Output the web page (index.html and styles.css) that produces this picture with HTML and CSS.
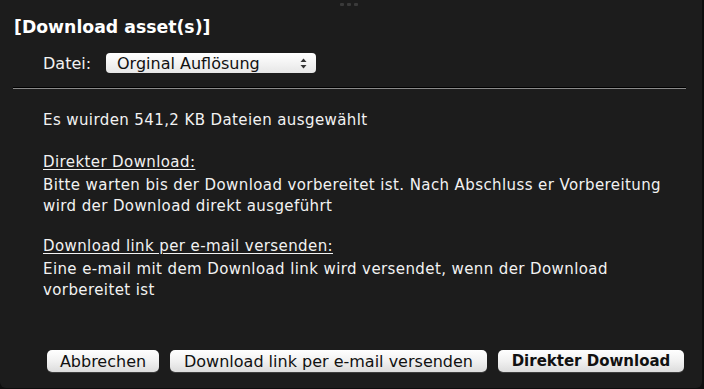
FILE: index.html
```html
<!DOCTYPE html>
<html lang="de">
<head>
  <meta charset="UTF-8" />
  <title>Download asset(s)</title>
  <link rel="stylesheet" href="styles.css">
</head>
<body>

<div class="dialog">
  <div class="grip"><span></span><span></span><span></span></div>

  <h1>[Download asset(s)]</h1>

  <div class="file-row">
    <label for="fileSelect">Datei:</label>
    <div class="select" id="fileSelect">
      <span>Orginal Auflösung</span>
      <svg class="arrows" width="7" height="11" viewBox="0 0 7 11">
        <path d="M3.5 0.5 L6.5 4 L0.5 4 Z" fill="#333" />
        <path d="M3.5 10.5 L6.5 7 L0.5 7 Z" fill="#333" />
      </svg>
    </div>
  </div>

  <hr class="divider" />

  <div class="content">
    <p class="summary">Es wuirden 541,2 KB Dateien ausgewählt</p>

    <div class="option first">
      <h2>Direkter Download:</h2>
      <p>Bitte warten bis der Download vorbereitet ist. Nach Abschluss er Vorbereitung wird der Download direkt ausgeführt</p>
    </div>

    <div class="option">
      <h2>Download link per e-mail versenden:</h2>
      <p>Eine e-mail mit dem Download link wird versendet, wenn der Download vorbereitet ist</p>
    </div>
  </div>

  <div class="buttons">
    <button class="btn cancel">Abbrechen</button>
    <button class="btn mail">Download link per e-mail versenden</button>
    <button class="btn primary">Direkter Download</button>
  </div>
</div>

</body>
</html>
```

FILE: styles.css
```css
body {
  margin: 0;
  background: #0e0e0e;
  font-family: "DejaVu Sans", sans-serif;
  color: #f2f2f2;
}
.dialog {
  position: relative;
  width: 702px;
  height: 388px;
  background: #1c1c1c;
  border-radius: 0 0 6px 6px;
  box-sizing: border-box;
  display: flex;
  flex-direction: column;
}
.grip {
  position: absolute;
  top: 3px;
  left: 340px;
  display: flex;
  gap: 3px;
}
.grip span {
  width: 4px;
  height: 3px;
  border-radius: 1px;
  background: #3a3a3a;
}
h1 {
  margin: 16px 0 0 14px;
  font-size: 17.3px;
  font-weight: bold;
  line-height: 22px;
  color: #fff;
}
.file-row {
  display: flex;
  align-items: center;
  height: 20px;
  margin: 15px 0 0 43px;
  font-size: 16px;
}
.file-row label {
  width: 63px;
}
.select {
  width: 210px;
  height: 20px;
  box-sizing: border-box;
  border-radius: 4px;
  background: linear-gradient(#ffffff, #f3f3f3 50%, #e6e6e6);
  color: #111;
  display: flex;
  align-items: center;
  justify-content: space-between;
  padding: 0 9px 0 11px;
  font-size: 16px;
}
.divider {
  margin: 15px 16px 0 13px;
  border: 0;
  height: 1px;
  background: #8a8a8a;
  box-shadow: 0 -1px 0 #000;
}
.content {
  margin: 0 0 0 43px;
  font-size: 15px;
  line-height: 21px;
  letter-spacing: 0.4px;
}
.summary {
  margin: 21px 0 0;
}
.option h2 {
  margin: 19px 0 2px;
  font-size: 15px;
  font-weight: normal;
  text-decoration: underline;
  text-underline-offset: 2px;
}
.option.first h2 {
  margin-top: 21px;
}
.option p {
  margin: 0;
  width: 630px;
}
.buttons {
  display: flex;
  gap: 11px;
  margin: auto 0 16px 47px;
}
.btn {
  height: 22px;
  border: 0;
  border-radius: 5px;
  background: linear-gradient(#ffffff, #f1f1f1 50%, #dcdcdc);
  box-shadow: 0 1px 0 rgba(255, 255, 255, 0.15);
  color: #111;
  font-family: "DejaVu Sans", sans-serif;
  font-size: 16px;
  padding: 0;
}
.cancel { width: 112px; }
.mail { width: 317px; }
.primary {
  width: 186px;
  font-size: 15px;
  font-weight: bold;
}
```
